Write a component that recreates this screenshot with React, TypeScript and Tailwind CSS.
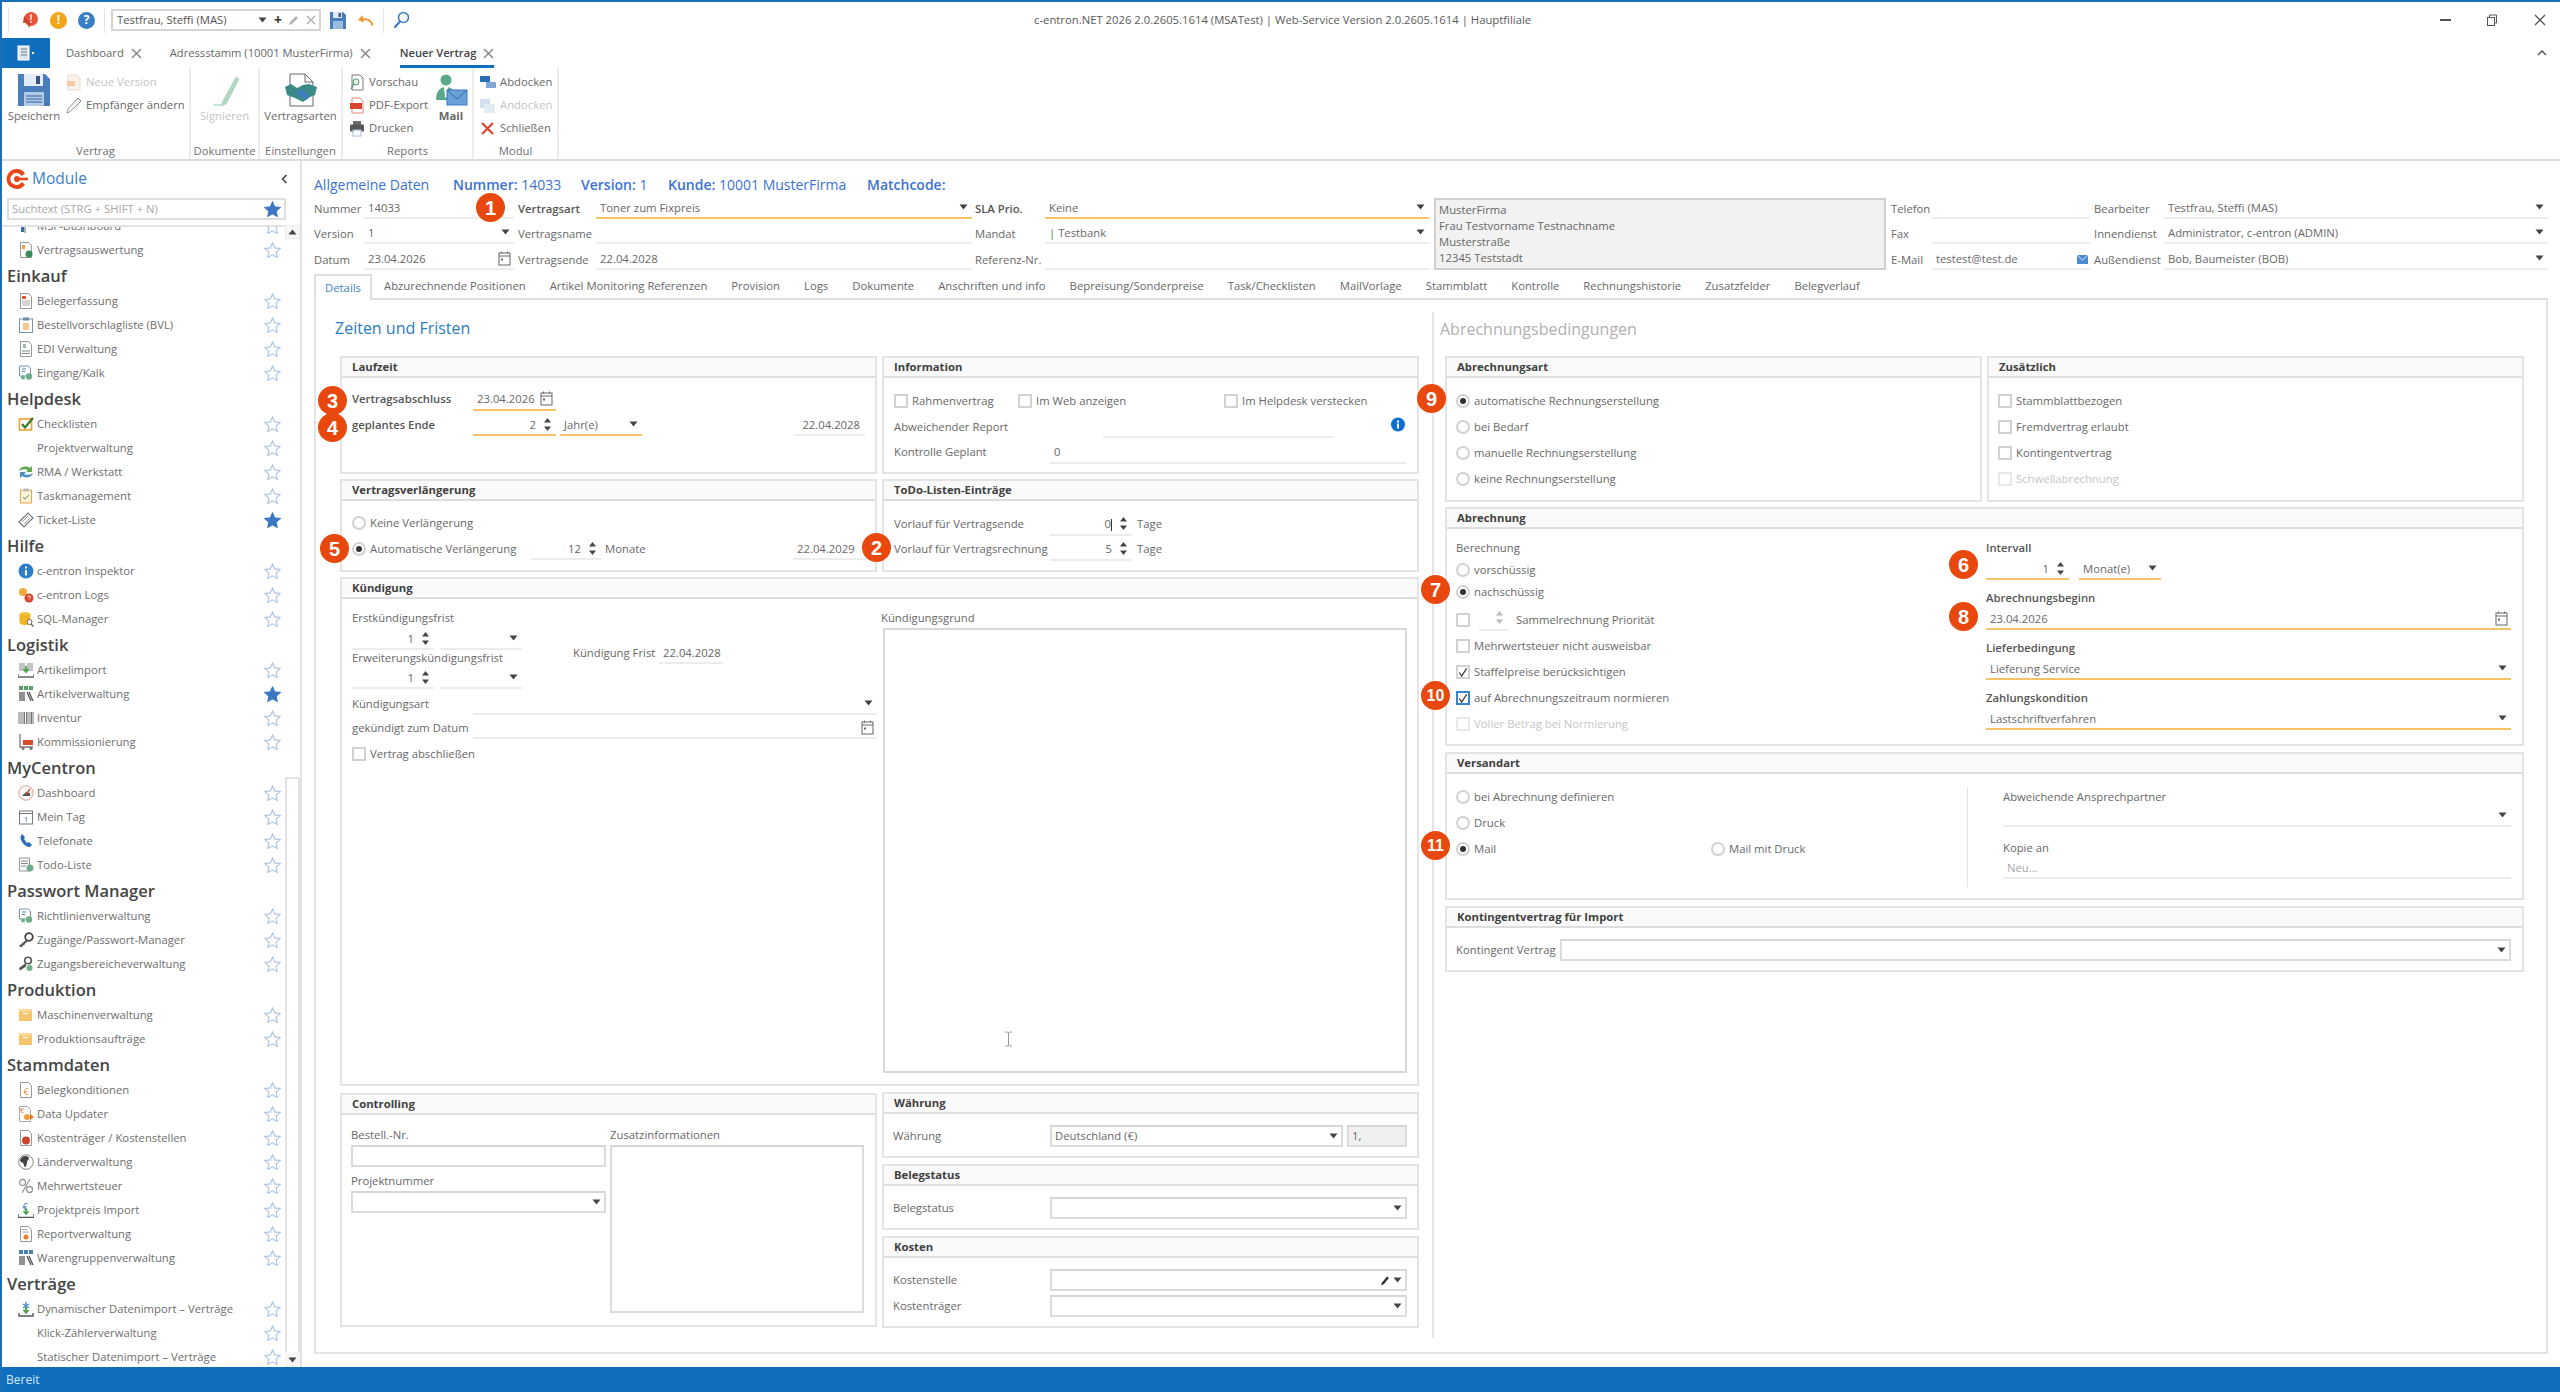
import React from 'react'
import clsx from 'clsx'

const Arrow = ({ className = '' }: { className?: string }) => (
  <svg width="9" height="6" viewBox="0 0 9 6" className={clsx('shrink-0', className)}><path d="M0.5 0.5h8L4.5 5.5z" fill="#444" /></svg>
)

const Spin = ({ faded }: { faded?: boolean }) => (
  <svg width="9" height="15" viewBox="0 0 9 15" className="shrink-0">
    <path d="M4.5 1L8 5.5H1z" fill={faded ? '#bbb' : '#444'} />
    <path d="M1 9.5h7L4.5 14z" fill={faded ? '#bbb' : '#444'} />
  </svg>
)

const Cal = () => (
  <svg width="13" height="15" viewBox="0 0 13 15" className="shrink-0" fill="none" stroke="#666" strokeWidth="1">
    <rect x="1" y="2" width="11" height="12" />
    <path d="M1 5h11M3.5 0.5v2M9.5 0.5v2" />
    <rect x="3" y="7.5" width="2" height="2" fill="#666" stroke="none" />
  </svg>
)

const Star = ({ on }: { on?: boolean }) => (
  <svg width="17" height="16" viewBox="0 0 24 23" className="shrink-0">
    <path d="M12 1.5l3.2 7 7.6.9-5.6 5.2 1.5 7.5L12 18.4l-6.7 3.7 1.5-7.5L1.2 9.4l7.6-.9z" fill={on ? '#3a78c0' : 'none'} stroke={on ? '#3a78c0' : '#a9c3e2'} strokeWidth="1.6" />
  </svg>
)

const sideIcons: Record<string, React.ReactNode> = {
  msf: <><path d="M3 4h3v10H3z" fill="#2a6fc0" /><path d="M7 1v14" stroke="#666" /><path d="M7 2h7l-2 3 2 3H7z" fill="#d83a20" /></>,
  doc: <><path d="M2.5 .5h8l3 3v12h-11z" fill="#fff" stroke="#999" /><path d="M4 3h4v3H4z" fill="#e25a3a" /><path d="M4 8h8M4 10h8M4 12h8" stroke="#aaa" /></>,
  report: <><path d="M2.5 .5h8l3 3v12h-11z" fill="#fff" stroke="#999" /><path d="M4 3h3v4H4z" fill="#f0a040" /><circle cx="11" cy="12" r="3.5" fill="#3a8a5a" /></>,
  clip: <><rect x="1.5" y="2" width="13" height="13.5" fill="#fff" stroke="#7a93ad" /><rect x="5" y=".5" width="6" height="3" fill="#6a8aa8" /><rect x="5" y="6" width="6" height="7" fill="#f0c890" /></>,
  edi: <><path d="M2.5 .5h8l3 3v12h-11z" fill="#fff" stroke="#999" /><path d="M5 3h3v4H5z" fill="#9cc49c" /><path d="M4 10h8M4 12.5h8" stroke="#888" /></>,
  gear: <><path d="M1.5 1h9l2 2v8h-11z" fill="#fff" stroke="#7a93ad" /><path d="M4 4h4M4 6.5h3" stroke="#4a80b0" /><circle cx="11" cy="11.5" r="3.2" fill="#6fae8a" /><circle cx="5" cy="12.5" r="2" fill="#6fae8a" /></>,
  check: <><rect x="1.5" y="3" width="12" height="11" fill="#fff" stroke="#f0a030" strokeWidth="1.6" /><path d="M4 8l3 3.5L15 2" stroke="#3e7d2a" strokeWidth="2.4" fill="none" /></>,
  rma: <><path d="M1 7c1-4 6-6 11-3l2-2v6H8l2-2C7 4.500 4 5 1 7z" fill="#5fa84a" /><path d="M15 9c-1 4-6 6-11 3l-2 2V8h6l-2 2c3 1.500 6 1 9-1z" fill="#4a90c8" /></>,
  task: <><rect x="2.500" y="2" width="11" height="13" fill="#fdf3d8" stroke="#e8a848" /><rect x="5.500" y=".5" width="5" height="3" fill="#bbb" /><path d="M5 9l2 2 4-4" stroke="#5a9a5a" fill="none" /></>,
  ticket: <><path d="M1 10L10 1l5 5-9 9z" fill="#fff" stroke="#777" strokeWidth="1.2" /><path d="M4 10l6-6M6 12l6-6" stroke="#999" /></>,
  info: <><circle cx="8" cy="8" r="7.500" fill="#2e7fc8" /><rect x="7" y="7" width="2" height="5.500" fill="#fff" /><rect x="7" y="3.500" width="2" height="2" fill="#fff" /></>,
  logs: <><circle cx="5" cy="5" r="4" fill="#f2a93a" /><circle cx="11" cy="11" r="4.500" fill="#d8452e" /><path d="M9.500 9.500c1-1 3-.5 3 .7 0 1-1.500 1-1.500 2" stroke="#fff" fill="none" /></>,
  sql: <><ellipse cx="7" cy="3.500" rx="5.500" ry="2.500" fill="#f3c13a" /><path d="M1.500 3.500v8c0 1.400 2.500 2.500 5.500 2.500s5.500-1 5.500-2.500v-8" fill="#f0b528" /><circle cx="11.500" cy="11" r="2.500" fill="#fff" stroke="#666" /><path d="M13 13l2.500 2.500" stroke="#666" strokeWidth="1.4" /></>,
  aimport: <><path d="M2 1v8M4 1v8M6 1v8M10 1v8M12 1v8M14 1v8" stroke="#888" /><path d="M8 4v5M5.500 7L8 10l2.500-3" stroke="#4aa04a" strokeWidth="1.8" fill="none" /><path d="M0 12v3h16v-3" stroke="#666" strokeWidth="1.4" fill="none" /></>,
  averw: <><path d="M1 0h4v4H1zM6 0h4v4H6zM11 0h4v4h-4z" fill="#58a06a" /><path d="M2 6v9M4 6v9M6 6v9M9 6l4 9M11 6l4 9" stroke="#555" strokeWidth="1.3" /></>,
  inv: <path d="M1 2v12M3 2v12M5 2v12M6.500 2v12M8.500 2v12M10 2v12M12 2v12M13.500 2v12M15 2v12" stroke="#777" />,
  komm: <><path d="M2 0v13h13" stroke="#777" strokeWidth="1.300" fill="none" /><rect x="5" y="6" width="10" height="5" fill="#d8492e" /><circle cx="5" cy="14.500" r="1.500" fill="#777" /><circle cx="13" cy="14.500" r="1.500" fill="#777" /></>,
  dash: <><circle cx="8" cy="8" r="7.200" fill="#fff" stroke="#e29a8a" /><path d="M4 11h8V8L8 7z" fill="#555" /><path d="M8 9L12 4" stroke="#d8492e" strokeWidth="1.300" /></>,
  cal: <><rect x="1.500" y="2" width="13" height="13" fill="#fff" stroke="#777" /><path d="M1.500 4.500h13" stroke="#777" /><text x="8" y="13" fontSize="8" textAnchor="middle" fill="#3a78c0">1</text></>,
  tel: <path d="M4 1c-2 2-2 5 0 8s5 5 8 5l2-2-3-3-2 1-3-4 1-2z" fill="#2a6fb5" />,
  todo: <><path d="M1.500 1h10v13h-10z" fill="#fff" stroke="#8a9a90" /><path d="M3 4h7M3 6.500h7M3 9h5" stroke="#888" /><circle cx="12" cy="11" r="3.500" fill="#6fae8a" /></>,
  key: <><circle cx="11" cy="5" r="3.800" fill="#fff" stroke="#444" strokeWidth="1.800" /><path d="M8 8l-6.500 5.500v1.500h2.500L5 13l1 .5 1.500-2.500L10 9z" fill="#555" /></>,
  keygear: <><circle cx="10" cy="4.500" r="3.300" fill="#fff" stroke="#555" strokeWidth="1.600" /><path d="M8 7l-7 5 1 2.500 6-4z" fill="#555" /><circle cx="11.500" cy="12" r="3" fill="#6fae8a" /></>,
  box: <><rect x="1" y="2" width="13" height="12" fill="#f6c569" /><rect x="1" y="2" width="13" height="2.500" fill="#fbdc9c" /><rect x="5" y="6" width="5" height="1.200" fill="#fff" /></>,
  euro: <><path d="M2.500 .5h8l3 3v12h-11z" fill="#fff" stroke="#999" /><text x="8" y="13" fontSize="9" textAnchor="middle" fill="#e88a30">€</text></>,
  upd: <><path d="M1.500 .5h8l3 3v12h-11z" fill="#fff" stroke="#aaa" /><text x="4" y="7" fontSize="7" textAnchor="middle" fill="#e8702a">€</text><circle cx="9" cy="11" r="3" fill="#f0a040" /><path d="M12 8l4 3-4 3z" fill="#e8702a" /></>,
  kost: <><path d="M2.500 .5h8l3 3v12h-11z" fill="#fff" stroke="#999" /><circle cx="8" cy="10.500" r="4" fill="#d0422a" /></>,
  globe: <><circle cx="8" cy="8" r="7.300" fill="#fff" stroke="#888" /><path d="M4 3c3-2 7-1 7 1s-2 2-2 4-1 5-2 5-1-3-2-4-3-1-3-3z" fill="#444" /></>,
  pct: <><circle cx="4.500" cy="4.500" r="3" fill="none" stroke="#999" strokeWidth="1.300" /><circle cx="11.500" cy="11.500" r="3" fill="none" stroke="#999" strokeWidth="1.300" /><path d="M12 1L4 15" stroke="#999" strokeWidth="1.300" /></>,
  pimp: <><text x="7" y="8" fontSize="9" textAnchor="middle" fill="#2a6fb5">€</text><path d="M8 6v5M5.500 9L8 12l2.500-3" stroke="#4aa04a" strokeWidth="1.600" fill="none" /><path d="M0 12v3.500h16V12" stroke="#555" strokeWidth="1.400" fill="none" /></>,
  rep: <><path d="M2.500 .5h8l3 3v12h-11z" fill="#fff" stroke="#999" /><path d="M4 3.500h5M4 6h7" stroke="#aaa" /><circle cx="8" cy="11" r="2.500" fill="#ef7a28" /></>,
  ware: <><path d="M1 0h4v4H1zM6 0h4v4H6zM11 0h4v4h-4z" fill="#4a80b0" /><path d="M2 6v9M4 6v9M6 6v9M9 6l4 9M11 6l4 9" stroke="#555" strokeWidth="1.3" /></>,
  dyn: <><path d="M8 1v9M5 3l6 4M11 3L5 7" stroke="#4a90c8" strokeWidth="1.400" /><path d="M8 6v5M5.500 9L8 12l2.500-3" stroke="#4aa04a" strokeWidth="1.700" fill="none" /><path d="M1 12v3h14v-3" stroke="#555" strokeWidth="1.400" fill="none" /></>,
}

type Item = { t: string; i?: string; on?: boolean }
const sidebar: { h?: string; items: Item[] }[] = [
  { items: [{ t: 'MSF-Dashboard', i: 'msf' }, { t: 'Vertragsauswertung', i: 'report' }] },
  { h: 'Einkauf', items: [{ t: 'Belegerfassung', i: 'doc' }, { t: 'Bestellvorschlagliste (BVL)', i: 'clip' }, { t: 'EDI Verwaltung', i: 'edi' }, { t: 'Eingang/Kalk', i: 'gear' }] },
  { h: 'Helpdesk', items: [{ t: 'Checklisten', i: 'check' }, { t: 'Projektverwaltung' }, { t: 'RMA / Werkstatt', i: 'rma' }, { t: 'Taskmanagement', i: 'task' }, { t: 'Ticket-Liste', i: 'ticket', on: true }] },
  { h: 'Hilfe', items: [{ t: 'c-entron Inspektor', i: 'info' }, { t: 'c-entron Logs', i: 'logs' }, { t: 'SQL-Manager', i: 'sql' }] },
  { h: 'Logistik', items: [{ t: 'Artikelimport', i: 'aimport' }, { t: 'Artikelverwaltung', i: 'averw', on: true }, { t: 'Inventur', i: 'inv' }, { t: 'Kommissionierung', i: 'komm' }] },
  { h: 'MyCentron', items: [{ t: 'Dashboard', i: 'dash' }, { t: 'Mein Tag', i: 'cal' }, { t: 'Telefonate', i: 'tel' }, { t: 'Todo-Liste', i: 'todo' }] },
  { h: 'Passwort Manager', items: [{ t: 'Richtlinienverwaltung', i: 'gear' }, { t: 'Zugänge/Passwort-Manager', i: 'key' }, { t: 'Zugangsbereicheverwaltung', i: 'keygear' }] },
  { h: 'Produktion', items: [{ t: 'Maschinenverwaltung', i: 'box' }, { t: 'Produktionsaufträge', i: 'box' }] },
  { h: 'Stammdaten', items: [{ t: 'Belegkonditionen', i: 'euro' }, { t: 'Data Updater', i: 'upd' }, { t: 'Kostenträger / Kostenstellen', i: 'kost' }, { t: 'Länderverwaltung', i: 'globe' }, { t: 'Mehrwertsteuer', i: 'pct' }, { t: 'Projektpreis Import', i: 'pimp' }, { t: 'Reportverwaltung', i: 'rep' }, { t: 'Warengruppenverwaltung', i: 'ware' }] },
  { h: 'Verträge', items: [{ t: 'Dynamischer Datenimport – Verträge', i: 'dyn' }, { t: 'Klick-Zählerverwaltung' }, { t: 'Statischer Datenimport – Verträge' }] },
]

const Sidebar = () => (
  <aside className="w-[300px] shrink-0 flex flex-col border-r-2 border-[#e2e2e2]">
    <div className="h-[37px] flex items-center pl-[3px] pr-[12px] pb-[2px]">
      <svg width="24" height="24" viewBox="0 0 24 24" className="shrink-0">
        <path d="M20 6.500A10 10 0 1 0 20 17.500L16.500 15A6 6 0 1 1 16.500 9z" fill="#e8471a" />
        <circle cx="12" cy="12" r="3" fill="#e8471a" />
        <path d="M15 12h8" stroke="#e8471a" strokeWidth="2.500" />
      </svg>
      <span className="ml-[3px] text-[15.5px] text-[#3a7fc4]">Module</span>
      <svg width="7" height="10" viewBox="0 0 7 10" className="ml-auto"><path d="M5.500 1L1.500 5l4 4" fill="none" stroke="#444" strokeWidth="1.600" /></svg>
    </div>
    <div className="mx-[5px] w-[279px] h-[22px] border-2 border-[#dedede] flex items-center pl-[3px] pr-[3px] text-[#a8a8a8]">
      <span className="flex-1">Suchtext (STRG + SHIFT + N)</span>
      <Star on />
    </div>
    <div className="mt-[5px] flex-1 min-h-0 flex">
      <div className="w-[284px] overflow-hidden border-t-2 border-[#e2e2e2]">
        <div className="-mt-[13px]">
          {sidebar.map((g, n) => (
            <div key={n}>
              {g.h && <div className="h-[27px] pl-[5px] pt-[1px] flex items-center text-[16.5px] font-semibold text-[#454545]">{g.h}</div>}
              {g.items.map((it) => (
                <div key={it.t} className="h-[24px] pl-[16px] pr-[4px] flex items-center">
                  <span className="w-[16px] h-[16px] shrink-0">
                    {it.i && <svg width="16" height="16" viewBox="0 0 16 16">{sideIcons[it.i]}</svg>}
                  </span>
                  <span className="ml-[3px] flex-1 text-[#6e6e6e]">{it.t}</span>
                  <Star on={it.on} />
                </div>
              ))}
            </div>
          ))}
        </div>
      </div>
      <div className="w-[15px] flex flex-col">
        <div className="h-[14px] bg-[#f6f6f6] flex items-center justify-center border border-[#ececec]"><Arrow className="rotate-180" /></div>
        <div className="h-[538px]" />
        <div className="flex-1 border-x-2 border-t-2 border-[#e2e2e2]" />
        <div className="h-[15px] bg-[#f6f6f6] flex items-center justify-center"><Arrow /></div>
      </div>
    </div>
  </aside>
)

const TitleBar = () => (
  <div className="h-[36px] shrink-0 relative flex items-center text-[#555]">
    <div className="ml-[6px] w-px h-[26px] bg-[#e6e6e6]" />
    <svg width="18" height="18" viewBox="0 0 18 18" className="ml-[12px]"><circle cx="10" cy="8" r="7" fill="#e8563a" /><path d="M3 5l-1 7 4-1 2 6 2-5z" fill="#c9442c" /><rect x="9" y="3" width="2" height="6" fill="#f7c3b6" /><rect x="9" y="10" width="2" height="2" fill="#f7c3b6" /></svg>
    <span className="ml-[11px] w-[17px] h-[17px] rounded-full bg-[#f2a516] text-white text-[12px] font-bold flex items-center justify-center">!</span>
    <span className="ml-[11px] w-[17px] h-[17px] rounded-full bg-[#3a7fc4] text-white text-[12px] font-bold flex items-center justify-center">?</span>
    <div className="ml-[9px] w-px h-[26px] bg-[#e6e6e6]" />
    <div className="ml-[6px] w-[210px] h-[22px] border-2 border-[#d4d4d4] flex items-center pl-[4px] pr-[3px]">
      <span className="flex-1">Testfrau, Steffi (MAS)</span>
      <Arrow />
      <span className="ml-[7px] text-[14px] font-bold text-[#333] leading-none">+</span>
      <svg width="12" height="12" viewBox="0 0 12 12" className="ml-[6px]"><path d="M1 11l1-3 6-6 2 2-6 6z" fill="#b5b5b5" /></svg>
      <svg width="10" height="10" viewBox="0 0 10 10" className="ml-[6px]"><path d="M1 1l8 8M9 1l-8 8" stroke="#b0b0b0" strokeWidth="1.400" /></svg>
    </div>
    <svg width="18" height="19" viewBox="0 0 18 19" className="ml-[8px]"><path d="M1 1h13l3 3v14H1z" fill="#4a7ebb" /><rect x="4" y="1" width="9" height="6" fill="#dfe9f5" /><rect x="9.500" y="2" width="2.500" height="4" fill="#3a5f8f" /><rect x="4" y="10" width="10" height="8" fill="#9cbbe0" /></svg>
    <svg width="17" height="13" viewBox="0 0 17 13" className="ml-[10px]"><path d="M15.500 11.500C14.500 6 9 4 3.500 6" fill="none" stroke="#ef9a32" strokeWidth="2" /><path d="M5.500 1L1 6l6 2.500z" fill="#ef9a32" /></svg>
    <div className="ml-[9px] w-px h-[26px] bg-[#e6e6e6]" />
    <svg width="17" height="18" viewBox="0 0 17 18" className="ml-[9px]"><circle cx="10.500" cy="6.500" r="5" fill="none" stroke="#3a7fc4" strokeWidth="1.600" /><path d="M7 10.500L1.500 16.500" stroke="#3a7fc4" strokeWidth="2.200" /></svg>
    <span className="absolute left-[1032px] top-[10px] whitespace-nowrap text-[#5a5a5a]">c-entron.NET 2026 2.0.2605.1614 (MSATest) | Web-Service Version 2.0.2605.1614 | Hauptfiliale</span>
    <div className="ml-auto flex items-center pr-[14px]">
      <div className="w-[11px] h-[2px] bg-[#555]" />
      <svg width="12" height="12" viewBox="0 0 12 12" className="ml-[35px]" fill="none" stroke="#555"><rect x="1.500" y="3.500" width="7" height="8" /><path d="M3.500 3.500v-2.500h7v8h-2" /></svg>
      <svg width="12" height="12" viewBox="0 0 12 12" className="ml-[36px]"><path d="M1 1l10 10M11 1L1 11" stroke="#555" strokeWidth="1.300" /></svg>
    </div>
  </div>
)

const TabX = () => (
  <svg width="11" height="11" viewBox="0 0 11 11" className="ml-[7px]"><path d="M1 1l9 9M10 1l-9 9" stroke="#8a8a8a" strokeWidth="1.500" /></svg>
)

const AppTabs = () => (
  <div className="h-[30px] shrink-0 flex items-center text-[11.2px] text-[#666]">
    <div className="w-[48px] h-full bg-[#106ebe] flex items-center justify-center">
      <svg width="18" height="16" viewBox="0 0 18 16"><rect x="1" y="1" width="11" height="14" fill="#dbe7f3" stroke="#fff" /><path d="M4 4h6M4 7h6M4 10h6" stroke="#777" /><rect x="15" y="7" width="2" height="2" fill="#fff" /></svg>
    </div>
    <div className="ml-[16px] h-full flex items-center"><span>Dashboard</span><TabX /></div>
    <div className="ml-[28px] h-full flex items-center"><span>Adressstamm (10001 MusterFirma)</span><TabX /></div>
    <div className="ml-[29px] h-full flex items-center border-b-[3px] border-[#106ebe] text-[#444] font-semibold pt-[3px]"><span>Neuer Vertrag</span><TabX /></div>
    <svg width="10" height="6" viewBox="0 0 10 6" className="ml-auto mr-[13px]"><path d="M1 5l4-4 4 4" fill="none" stroke="#555" strokeWidth="1.500" /></svg>
  </div>
)

const RGroup = ({ label, className, children }: { label: string; className: string; children: React.ReactNode }) => (
  <div className={clsx('h-[91px] flex flex-col border-r-2 border-[#ededed]', className)}>
    <div className="h-[75px] flex">{children}</div>
    <div className="h-[16px] flex items-center justify-center whitespace-nowrap text-[#707070]">{label}</div>
  </div>
)

const RSmall = ({ icon, children, off }: { icon: React.ReactNode; children: React.ReactNode; off?: boolean }) => (
  <div className={clsx('h-[23px] flex items-center gap-[4px]', off ? 'text-[#c4c4c4]' : 'text-[#696969]')}>
    <svg width="16" height="17" viewBox="0 0 16 17" className="shrink-0">{icon}</svg>
    <span className="whitespace-nowrap">{children}</span>
  </div>
)

const RBig = ({ icon, label, off, bold, className }: { icon: React.ReactNode; label: string; off?: boolean; bold?: boolean; className?: string }) => (
  <div className={clsx('flex flex-col items-center pt-[5px]', className)}>
    <svg width="34" height="34" viewBox="0 0 34 34" className="shrink-0">{icon}</svg>
    <span className={clsx('mt-[1px] whitespace-nowrap', off ? 'text-[#c4c4c4]' : 'text-[#696969]', bold && 'font-bold text-[#555]')}>{label}</span>
  </div>
)

const Ribbon = () => (
  <div className="h-[93px] shrink-0 flex border-b-2 border-[#dcdcdc]">
    <RGroup label="Vertrag" className="w-[189px]">
      <RBig className="w-[60px] ml-[2px]" label="Speichern" icon={<><path d="M1 1h27l5 5v27H1z" fill="#4a7ebb" /><rect x="7" y="1" width="19" height="12" fill="#e3ecf6" /><rect x="19" y="3" width="4" height="8" fill="#33557f" /><rect x="7" y="19" width="20" height="14" fill="#b2cae6" /><path d="M9 23h16M9 26h16M9 29h16" stroke="#5f87b8" strokeWidth="1.400" /></>} />
      <div className="ml-[2px] pt-[3px]">
        <RSmall off icon={<><path d="M2 1h9l3 3v12H2z" fill="#fbf2ea" stroke="#e8dcd0" /><rect x="1" y="7" width="8" height="5" fill="#f5c8a0" /></>}>Neue Version</RSmall>
        <RSmall icon={<path d="M1 16c0-4 3-6 11-15l3 3C7 12 4 15 1 16z" fill="#fff" stroke="#888" />}>Empfänger ändern</RSmall>
      </div>
    </RGroup>
    <RGroup label="Dokumente" className="w-[69px]">
      <RBig className="w-full" off label="Signieren" icon={<><path d="M14 30L28 4l3 2-13 25-4 1z" fill="#a8dcc0" stroke="#c9c9c9" /><path d="M6 32h10" stroke="#a8dcc0" strokeWidth="1.500" /></>} />
    </RGroup>
    <RGroup label="Einstellungen" className="w-[83px]">
      <RBig className="w-full" label="Vertragsarten" icon={<><path d="M6 1h15l8 8v24H6z" fill="#fff" stroke="#666" /><path d="M21 1v8h8" fill="none" stroke="#666" /><path d="M1 14l6-3 6 4 6-3 6-1 8 3-2 8-5 2-7 5-8-4-8-3z" fill="#3c8a86" /><path d="M12 20l6-4 8 7-4 4z" fill="#3f7fbf" /></>} />
    </RGroup>
    <RGroup label="Reports" className="w-[131px]">
      <div className="w-[87px] pl-[6px] pt-[3px]">
        <RSmall icon={<><path d="M3 1h8l3 3v12H3z" fill="#fff" stroke="#777" /><circle cx="7" cy="8" r="3" fill="#e4f0e4" stroke="#4a9a6a" /><path d="M5 10l-3 5" stroke="#4a9a6a" strokeWidth="1.300" /></>}>Vorschau</RSmall>
        <RSmall icon={<><path d="M3 1h8l3 3v12H3z" fill="#fff" stroke="#e28a7a" /><rect x="1" y="6" width="12" height="6" fill="#d8452e" /></>}>PDF-Export</RSmall>
        <RSmall icon={<><rect x="4" y="1" width="8" height="4" fill="#6c6c6c" /><rect x="1" y="4.500" width="14" height="7" rx="1" fill="#565656" /><rect x="4" y="10" width="8" height="6" fill="#fff" stroke="#a6c0dc" /></>}>Drucken</RSmall>
      </div>
      <RBig className="w-[42px]" bold label="Mail" icon={<><circle cx="12" cy="7" r="5.500" fill="#5aa88a" /><path d="M2 27c0-9 4-13 10-13s10 4 10 13z" fill="#5aa88a" /><path d="M10 14h4l-1 10-1 1-1-1z" fill="#fff" /><rect x="13" y="17" width="20" height="15" fill="#6b9fd8" stroke="#3a78c0" /><path d="M13 17l10 9 10-9" fill="none" stroke="#2f68a8" /></>} />
    </RGroup>
    <RGroup label="Modul" className="w-[85px]">
      <div className="pl-[6px] pt-[3px]">
        <RSmall icon={<><rect x="0" y="2" width="10" height="6" fill="#2a6fb5" /><rect x="6" y="8" width="10" height="6" fill="#7fa8d8" /></>}>Abdocken</RSmall>
        <RSmall off icon={<><rect x="0" y="2" width="10" height="9" fill="#d2dfef" /><rect x="4" y="7" width="11" height="9" fill="#e3ebf5" /></>}>Andocken</RSmall>
        <RSmall icon={<path d="M2 3l11 11M13 3L2 14" stroke="#e0452e" strokeWidth="2.200" />}>Schließen</RSmall>
      </div>
    </RGroup>
  </div>
)

const Field = ({ className, children, orange, right, arrow, cal, spin, pl = true }: { className?: string; children?: React.ReactNode; orange?: boolean; right?: boolean; arrow?: boolean; cal?: boolean; spin?: boolean; pl?: boolean }) => (
  <div className={clsx('h-[22px] shrink-0 flex items-center border-b-2 pt-[2px]', orange ? 'border-[#f8c266]' : 'border-[#ececec]', className)}>
    <span className={clsx('flex-1 min-w-0 whitespace-nowrap', pl && 'pl-[4px]', right && 'text-right')}>{children}</span>
    {spin && <span className="ml-[7px] mr-[4px] flex -mt-[2px]"><Spin /></span>}
    {arrow && <span className="mr-[4px] flex -mt-[2px]"><Arrow /></span>}
    {cal && <span className="mr-[3px] flex -mt-[2px]"><Cal /></span>}
  </div>
)

const Box = ({ className, children, arrow, pencil }: { className?: string; children?: React.ReactNode; arrow?: boolean; pencil?: boolean }) => (
  <div className={clsx('h-[22px] shrink-0 flex items-center border-2 border-[#dcdcdc] border-t-[#d6d6d6]', className)}>
    <span className="flex-1 pl-[3px]">{children}</span>
    {pencil && <svg width="10" height="11" viewBox="0 0 10 11" className="mr-[3px]"><path d="M1 10.500l1-3 5-6 2 1.500-5 6z" fill="#333" /></svg>}
    {arrow && <span className="mr-[3px] flex"><Arrow /></span>}
  </div>
)

const Check = ({ on, off, focus }: { on?: boolean; off?: boolean; focus?: boolean }) => (
  <span className={clsx('w-[14px] h-[14px] shrink-0 border-2 bg-white flex items-center justify-center', focus ? 'border-[#3a82cc]' : off ? 'border-[#e8e8e8]' : 'border-[#d2d2d2]')}>
    {on && <svg width="11" height="11" viewBox="0 0 11 11"><path d="M1.500 5.500l2.500 4L9.500 1" fill="none" stroke="#333" strokeWidth="1.300" /></svg>}
  </span>
)

const Radio = ({ on }: { on?: boolean }) => (
  <span className="w-[14px] h-[14px] shrink-0 rounded-full border-2 border-[#d2d2d2] bg-white flex items-center justify-center">
    {on && <span className="w-[6px] h-[6px] rounded-full bg-[#333]" />}
  </span>
)

const Opt = ({ kind, on, off, focus, children, className }: { kind: 'r' | 'c'; on?: boolean; off?: boolean; focus?: boolean; children: React.ReactNode; className?: string }) => (
  <div className={clsx('flex items-center gap-[4px] whitespace-nowrap', off && 'text-[#c6c6c6]', className)}>
    {kind === 'r' ? <Radio on={on} /> : <Check on={on} off={off} focus={focus} />}
    <span>{children}</span>
  </div>
)

const Section = ({ title, className, children }: { title: string; className?: string; children: React.ReactNode }) => (
  <section className={clsx('border-x-2 border-y-2 border-[#e4e4e4] flex flex-col shrink-0', className)}>
    <div className="h-[20px] shrink-0 bg-[#fafafa] border-b-2 border-[#dedede] flex items-center pl-[10px] font-bold text-[#404040]">{title}</div>
    {children}
  </section>
)

const Badge = ({ n, className }: { n: number; className: string }) => (
  <span className={clsx("absolute z-10 w-[29px] h-[29px] rounded-full bg-[#e8480e] text-white font-bold flex items-center justify-center font-['Liberation_Sans',sans-serif]", n > 9 ? 'text-[16px]' : 'text-[20px]', className)}>{n}</span>
)

const tabs = ['Abzurechnende Positionen', 'Artikel Monitoring Referenzen', 'Provision', 'Logs', 'Dokumente', 'Anschriften und info', 'Bepreisung/Sonderpreise', 'Task/Checklisten', 'MailVorlage', 'Stammblatt', 'Kontrolle', 'Rechnungshistorie', 'Zusatzfelder', 'Belegverlauf']

const Header = () => (
  <>
    <div className="h-[36px] flex items-end pb-[2px] text-[14px] text-[#3c72d4] whitespace-nowrap">
      <span className="w-[139px]">Allgemeine Daten</span>
      <span className="w-[128px]"><b className="font-semibold">Nummer:</b> 14033</span>
      <span className="w-[87px]"><b className="font-semibold">Version:</b> 1</span>
      <span className="w-[199px]"><b className="font-semibold">Kunde:</b> 10001 MusterFirma</span>
      <span className="font-semibold">Matchcode:</span>
    </div>
    <div className="flex">
      <div className="grid grid-cols-[50px_150px_82px_376px_73px_384px] grid-rows-[25px_26px_25px]">
        <span className="h-[22px] pt-[2px] flex items-center">Nummer</span><Field>14033</Field>
        <span className="h-[22px] pt-[2px] pl-[4px] flex items-center font-semibold text-[#555]">Vertragsart</span><Field orange arrow>Toner zum Fixpreis</Field>
        <span className="h-[22px] pt-[2px] pl-[3px] flex items-center font-semibold text-[#555]">SLA Prio.</span><Field orange arrow>Keine</Field>
        <span className="h-[22px] pt-[2px] flex items-center">Version</span><Field arrow>1</Field>
        <span className="h-[22px] pt-[2px] pl-[4px] flex items-center">Vertragsname</span><Field />
        <span className="h-[22px] pt-[2px] pl-[3px] flex items-center">Mandat</span><Field arrow>| Testbank</Field>
        <span className="h-[22px] pt-[2px] flex items-center">Datum</span><Field cal>23.04.2026</Field>
        <span className="h-[22px] pt-[2px] pl-[4px] flex items-center">Vertragsende</span><Field>22.04.2028</Field>
        <span className="h-[22px] pt-[2px] pl-[3px] flex items-center">Referenz-Nr.</span><Field />
      </div>
      <div className="ml-[5px] mt-[1px] w-[452px] h-[72px] border-2 border-[#d0d0d0] bg-[#f2f2f2] pl-[3px] leading-[16px] pt-[2px] text-[#666]">
        <div>MusterFirma</div>
        <div>Frau Testvorname Testnachname</div>
        <div>Musterstraße</div>
        <div>12345 Teststadt</div>
      </div>
      <div className="ml-[5px] grid grid-cols-[41px_158px_74px_384px] grid-rows-[25px_26px_25px]">
        <span className="h-[22px] pt-[2px] flex items-center">Telefon</span><Field />
        <span className="h-[22px] pt-[2px] pl-[4px] flex items-center">Bearbeiter</span><Field arrow>Testfrau, Steffi (MAS)</Field>
        <span className="h-[22px] pt-[2px] flex items-center">Fax</span><Field />
        <span className="h-[22px] pt-[2px] pl-[4px] flex items-center">Innendienst</span><Field arrow>Administrator, c-entron (ADMIN)</Field>
        <span className="h-[22px] pt-[2px] flex items-center">E-Mail</span>
        <Field><span className="flex items-center">testest@test.de<svg width="11" height="9" viewBox="0 0 11 9" className="ml-auto mr-[2px]"><rect width="11" height="9" fill="#4a8ad0" /><path d="M0 0l5.500 5L11 0" fill="none" stroke="#dbe9f8" /></svg></span></Field>
        <span className="h-[22px] pt-[2px] pl-[4px] flex items-center">Außendienst</span><Field arrow>Bob, Baumeister (BOB)</Field>
      </div>
    </div>
    <div className="h-[26px] mt-[1px] flex items-end border-b-2 border-[#dedede] w-[2234px]">
      <div className="h-[26px] -mb-[2px] w-[58px] border-x-2 border-t-2 border-[#dedede] bg-white text-[#3a86c8] flex items-center justify-center">Details</div>
      {tabs.map((t) => <span key={t} className="h-[24px] px-[12px] flex items-center whitespace-nowrap">{t}</span>)}
    </div>
  </>
)

const LeftPane = () => (
  <div className="w-[1116px] shrink-0 pl-[24px]">
    <div className="h-[56px] flex items-center -ml-[5px] text-[16px] text-[#2c7cc4]">Zeiten und Fristen</div>
    <div className="grid grid-cols-[537px_537px] gap-x-[5px]">
      <div className="flex flex-col gap-[5px]">
        <Section title="Laufzeit" className="h-[118px]">
          <div className="pl-[10px] pr-[10px] pt-[9px]">
            <div className="h-[25px] flex items-center">
              <span className="w-[121px] font-semibold text-[#555]">Vertragsabschluss</span>
              <Field orange cal className="w-[83px]">23.04.2026</Field>
            </div>
            <div className="h-[26px] flex items-center">
              <span className="w-[121px] font-semibold text-[#555]">geplantes Ende</span>
              <Field orange right spin className="w-[83px]">2</Field>
              <Field orange arrow className="ml-[4px] w-[82px]">Jahr(e)</Field>
              <Field right className="ml-auto w-[70px] pr-[5px]">22.04.2028</Field>
            </div>
          </div>
        </Section>
        <Section title="Vertragsverlängerung" className="h-[93px]">
          <div className="pl-[10px] pr-[7px] pt-[9px]">
            <div className="h-[26px] flex items-center"><Opt kind="r">Keine Verlängerung</Opt></div>
            <div className="h-[26px] flex items-center">
              <Opt kind="r" on className="w-[179px]">Automatische Verlängerung</Opt>
              <Field right spin className="w-[70px]">12</Field>
              <span className="ml-[4px]">Monate</span>
              <Field className="ml-auto w-[75px]">22.04.2029</Field>
            </div>
          </div>
        </Section>
      </div>
      <div className="flex flex-col gap-[5px]">
        <Section title="Information" className="h-[118px]">
          <div className="pl-[10px] pr-[11px] pt-[10px]">
            <div className="h-[26px] flex items-center">
              <Opt kind="c" className="w-[124px]">Rahmenvertrag</Opt>
              <Opt kind="c" className="w-[206px]">Im Web anzeigen</Opt>
              <Opt kind="c">Im Helpdesk verstecken</Opt>
            </div>
            <div className="h-[26px] flex items-center">
              <span className="w-[209px]">Abweichender Report</span>
              <Field className="w-[230px]" />
              <svg width="14" height="15" viewBox="0 0 14 15" className="ml-[58px] -mt-[6px]"><circle cx="7" cy="7.500" r="7" fill="#0f6fd0" /><rect x="6" y="6.500" width="2" height="5" fill="#fff" /><rect x="6" y="3.500" width="2" height="2" fill="#fff" /></svg>
            </div>
            <div className="h-[25px] flex items-center">
              <span className="w-[156px]">Kontrolle Geplant</span>
              <Field className="flex-1">0</Field>
            </div>
          </div>
        </Section>
        <Section title="ToDo-Listen-Einträge" className="h-[93px]">
          <div className="pl-[10px] pt-[11px]">
            <div className="h-[25px] flex items-center">
              <span className="w-[156px]">Vorlauf für Vertragsende</span>
              <Field right spin className="w-[82px]">0<span className="inline-block w-px h-[12px] bg-[#333] align-middle" /></Field>
              <span className="ml-[5px]">Tage</span>
            </div>
            <div className="h-[25px] flex items-center">
              <span className="w-[156px]">Vorlauf für Vertragsrechnung</span>
              <Field right spin className="w-[82px]">5</Field>
              <span className="ml-[5px]">Tage</span>
            </div>
          </div>
        </Section>
      </div>
    </div>
    <Section title="Kündigung" className="mt-[5px] w-[1079px] h-[509px]">
      <div className="flex pt-[9px]">
        <div className="w-[539px] pl-[10px]">
          <div className="flex">
            <div className="w-[221px]">
              <div className="h-[20px] flex items-center">Erstkündigungsfrist</div>
              <div className="flex"><Field right spin pl={false} className="w-[82px]">1</Field><Field arrow className="ml-[6px] w-[82px]" /></div>
              <div className="h-[17px] flex items-center">Erweiterungskündigungsfrist</div>
              <div className="flex"><Field right spin pl={false} className="w-[82px]">1</Field><Field arrow className="ml-[6px] w-[82px]" /></div>
            </div>
            <div className="pt-[34px] flex items-start">
              <span className="h-[22px] w-[86px] flex items-center">Kündigung Frist</span>
              <Field className="w-[64px]">22.04.2028</Field>
            </div>
          </div>
          <div className="mt-[4px] flex"><span className="w-[122px] flex items-center">Kündigungsart</span><Field arrow className="w-[403px]" /></div>
          <div className="mt-[2px] flex"><span className="w-[122px] flex items-center">gekündigt zum Datum</span><Field cal className="w-[403px]" /></div>
          <Opt kind="c" className="mt-[5px] h-[20px]">Vertrag abschließen</Opt>
        </div>
        <div>
          <div className="h-[20px] flex items-center">Kündigungsgrund</div>
          <div className="relative ml-[2px] w-[524px] h-[445px] border-2 border-[#d8d8d8]">
            <svg width="9" height="16" viewBox="0 0 9 16" className="absolute left-[119px] top-[401px]"><path d="M1 1h2.500l1 1 1-1H8M4.500 2v12M1 15h2.500l1-1 1 1H8" fill="none" stroke="#999" /></svg>
          </div>
        </div>
      </div>
    </Section>
    <div className="mt-[6px] grid grid-cols-[537px_537px] gap-x-[5px]">
      <Section title="Controlling" className="mt-[1px] h-[234px]">
        <div className="flex pl-[9px] pt-[10px]">
          <div className="w-[255px]">
            <div className="h-[20px] flex items-center">Bestell.-Nr.</div>
            <Box />
            <div className="h-[24px] pt-[4px] flex items-center">Projektnummer</div>
            <Box arrow />
          </div>
          <div className="ml-[4px] w-[254px]">
            <div className="h-[20px] flex items-center">Zusatzinformationen</div>
            <Box className="!h-[168px]" />
          </div>
        </div>
      </Section>
      <div className="flex flex-col gap-[6px]">
        <Section title="Währung" className="h-[66px]">
          <div className="flex items-center pl-[9px] pt-[11px]">
            <span className="w-[157px]">Währung</span>
            <Box arrow className="w-[293px]">Deutschland (€)</Box>
            <Box className="ml-[4px] w-[60px] bg-[#f0f0f0]">1,</Box>
          </div>
        </Section>
        <Section title="Belegstatus" className="h-[66px]">
          <div className="flex items-center pl-[9px] pt-[11px]">
            <span className="w-[157px]">Belegstatus</span>
            <Box arrow className="w-[357px]" />
          </div>
        </Section>
        <Section title="Kosten" className="h-[92px]">
          <div className="flex items-center pl-[9px] pt-[11px]">
            <span className="w-[157px]">Kostenstelle</span>
            <Box arrow pencil className="w-[357px]" />
          </div>
          <div className="flex items-center pl-[9px] pt-[4px]">
            <span className="w-[157px]">Kostenträger</span>
            <Box arrow className="w-[357px]" />
          </div>
        </Section>
      </div>
    </div>
  </div>
)

const RightPane = () => (
  <div className="mt-[12px] mb-[14px] flex-1 border-l-2 border-[#e4e4e4] pl-[11px]">
    <div className="h-[34px] mb-[10px] -ml-[5px] flex items-center text-[16px] text-[#b0b0b0] whitespace-nowrap">Abrechnungsbedingungen</div>
    <div className="flex gap-[5px]">
      <Section title="Abrechnungsart" className="w-[537px] h-[146px]">
        <div className="pl-[9px] pt-[10px]">
          {['automatische Rechnungserstellung', 'bei Bedarf', 'manuelle Rechnungserstellung', 'keine Rechnungserstellung'].map((t, i) => <Opt key={t} kind="r" on={i === 0} className="h-[26px]">{t}</Opt>)}
        </div>
      </Section>
      <Section title="Zusätzlich" className="w-[537px] h-[146px]">
        <div className="pl-[9px] pt-[10px]">
          <Opt kind="c" className="h-[26px]">Stammblattbezogen</Opt>
          <Opt kind="c" className="h-[26px]">Fremdvertrag erlaubt</Opt>
          <Opt kind="c" className="h-[26px]">Kontingentvertrag</Opt>
          <Opt kind="c" off className="h-[26px]">Schwellabrechnung</Opt>
        </div>
      </Section>
    </div>
    <Section title="Abrechnung" className="mt-[5px] w-[1079px] h-[239px]">
      <div className="flex pt-[9px]">
        <div className="w-[539px] pl-[9px]">
          <div className="h-[20px] flex items-center">Berechnung</div>
          <Opt kind="r" className="h-[22px] mt-[1px]">vorschüssig</Opt>
          <Opt kind="r" on className="h-[22px]">nachschüssig</Opt>
          <div className="mt-[4px] h-[26px] flex items-center">
            <Check />
            <Field right className="ml-[9px] w-[29px]"><span className="inline-flex mr-[4px]"><Spin faded /></span></Field>
            <span className="ml-[8px]">Sammelrechnung Priorität</span>
          </div>
          <Opt kind="c" className="h-[26px]">Mehrwertsteuer nicht ausweisbar</Opt>
          <Opt kind="c" on className="h-[26px]">Staffelpreise berücksichtigen</Opt>
          <Opt kind="c" on focus className="h-[26px]">auf Abrechnungszeitraum normieren</Opt>
          <Opt kind="c" off className="h-[26px]">Voller Betrag bei Normierung</Opt>
        </div>
        <div className="w-[525px]">
          <div className="h-[20px] flex items-center font-semibold text-[#555]">Intervall</div>
          <div className="flex"><Field orange right spin className="w-[83px]">1</Field><Field orange arrow className="ml-[10px] w-[82px]">Monat(e)</Field></div>
          <div className="mt-[8px] h-[20px] flex items-center font-semibold text-[#555]">Abrechnungsbeginn</div>
          <Field orange cal>23.04.2026</Field>
          <div className="mt-[8px] h-[20px] flex items-center font-semibold text-[#555]">Lieferbedingung</div>
          <Field orange arrow>Lieferung Service</Field>
          <div className="mt-[8px] h-[20px] flex items-center font-semibold text-[#555]">Zahlungskondition</div>
          <Field orange arrow>Lastschriftverfahren</Field>
        </div>
      </div>
    </Section>
    <Section title="Versandart" className="mt-[6px] w-[1079px] h-[148px]">
      <div className="flex">
        <div className="w-[520px] pl-[9px] pt-[10px]">
          <Opt kind="r" className="h-[26px]">bei Abrechnung definieren</Opt>
          <Opt kind="r" className="h-[26px]">Druck</Opt>
          <div className="h-[26px] flex items-center">
            <Opt kind="r" on className="w-[255px]">Mail</Opt>
            <Opt kind="r">Mail mit Druck</Opt>
          </div>
        </div>
        <div className="mt-[13px] w-px h-[100px] bg-[#e2e2e2]" />
        <div className="ml-[35px] mt-[13px] w-[508px]">
          <div className="h-[20px] flex items-center">Abweichende Ansprechpartner</div>
          <Field arrow className="-mt-[2px]" />
          <div className="mt-[11px] h-[20px] flex items-center">Kopie an</div>
          <Field className="-mt-[1px] text-[#a8a8a8]">Neu...</Field>
        </div>
      </div>
    </Section>
    <Section title="Kontingentvertrag für Import" className="mt-[6px] w-[1079px] h-[66px]">
      <div className="flex items-center pl-[9px] pt-[11px]">
        <span className="w-[104px]">Kontingent Vertrag</span>
        <Box arrow className="w-[951px]" />
      </div>
    </Section>
  </div>
)

export default function App() {
  return (
    <div className="relative w-[2560px] h-[1392px] overflow-hidden flex flex-col bg-white border-t-2 border-l-2 border-[#1a6fb5] font-['Open_Sans',sans-serif] text-[11.3px] text-[#686868]">
      <TitleBar />
      <AppTabs />
      <Ribbon />
      <div className="flex-1 min-h-0 flex">
        <Sidebar />
        <main className="flex-1 min-w-0 pl-[12px]">
          <Header />
          <div className="w-[2234px] h-[1054px] flex border-x-2 border-b-2 border-[#e4e4e4]">
            <LeftPane />
            <RightPane />
          </div>
        </main>
      </div>
      <div className="h-[25px] shrink-0 -ml-[2px] bg-[#106ebe] flex items-center pl-[6px] text-[12px] text-[#d3e5f6]">Bereit</div>

      <Badge n={1} className="left-[474px] top-[191px]" />
      <Badge n={3} className="left-[316px] top-[384px]" />
      <Badge n={4} className="left-[316px] top-[411px]" />
      <Badge n={5} className="left-[318px] top-[532px]" />
      <Badge n={2} className="left-[860px] top-[531px]" />
      <Badge n={9} className="left-[1415px] top-[382px]" />
      <Badge n={6} className="left-[1947px] top-[548px]" />
      <Badge n={7} className="left-[1419px] top-[573px]" />
      <Badge n={8} className="left-[1947px] top-[600px]" />
      <Badge n={10} className="left-[1419px] top-[679px]" />
      <Badge n={11} className="left-[1419px] top-[829px]" />
    </div>
  )
}
